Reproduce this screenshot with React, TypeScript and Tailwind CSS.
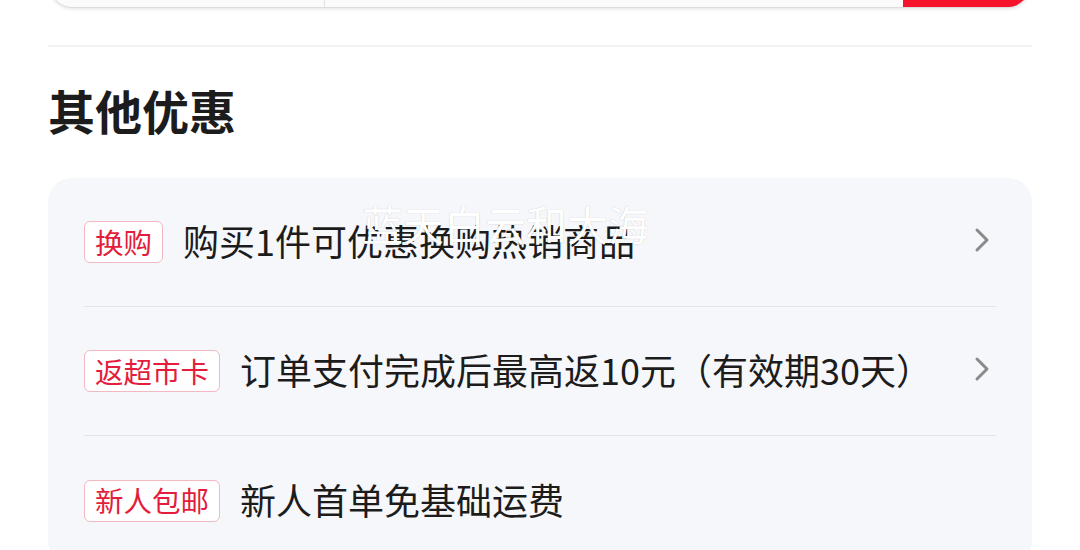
import { ChevronRight } from 'lucide-react';

interface Offer {
  tag: string;
  text: string;
  arrow: boolean;
}

const offers: Offer[] = [
  { tag: '换购', text: '购买1件可优惠换购热销商品', arrow: true },
  { tag: '返超市卡', text: '订单支付完成后最高返10元（有效期30天）', arrow: true },
  { tag: '新人包邮', text: '新人首单免基础运费', arrow: false },
];

export default function App() {
  return (
    <div
      className="relative h-[550px] w-[1080px] overflow-hidden bg-white"
      style={{ fontFamily: '"Noto Sans CJK SC", "Noto Sans", sans-serif' }}
    >
      <div className="px-12">
        {/* 上方输入栏的底边 */}
        <div className="-mt-[52px] mx-[2px] flex h-[60px] overflow-hidden rounded-b-[22px] border border-[#dcdcdc] bg-[#fbfbfb] shadow-[0_2px_3px_rgba(0,0,0,0.08)]">
          <div className="w-[274px] border-r border-[#e2e2e2]" />
          <div className="flex-1" />
          <div className="w-[126px] bg-[#f7132b]" />
        </div>

        <div className="mt-[37px] h-[2px] bg-[#f3f3f3]" />

        <h2 className="mt-[31px] text-[47px] font-bold leading-[64px] text-[#1c1c1c]">其他优惠</h2>

        {/* 优惠列表 */}
        <div className="mt-[36px] rounded-[24px] bg-[#f6f7fa] px-9">
          {offers.map((offer, i) => (
            <div
              key={offer.tag}
              className={`flex h-[129px] items-center ${i < offers.length - 1 ? 'border-b border-[#e4e4e6]' : ''}`}
            >
              <span className="flex h-[42px] items-center rounded-[6px] border border-[#f3b9c2] bg-white px-[10px] text-[28.5px] leading-none text-[#e31d3b]">
                {offer.tag}
              </span>
              <span className="mb-1 ml-5 flex-1 text-[36px] leading-none text-[#1c1c1c]">{offer.text}</span>
              {offer.arrow && (
                <ChevronRight className="-mr-[6px] mb-1 h-10 w-10 text-[#8a8a8a]" strokeWidth={1.8} />
              )}
            </div>
          ))}
        </div>
      </div>

      {/* 水印 */}
      <div className="pointer-events-none absolute left-[362px] top-[198px] text-[41px] leading-[50px] text-white [text-shadow:0_0_1px_rgba(0,0,0,0.25)]">
        蓝天白云和大海
      </div>
    </div>
  );
}
